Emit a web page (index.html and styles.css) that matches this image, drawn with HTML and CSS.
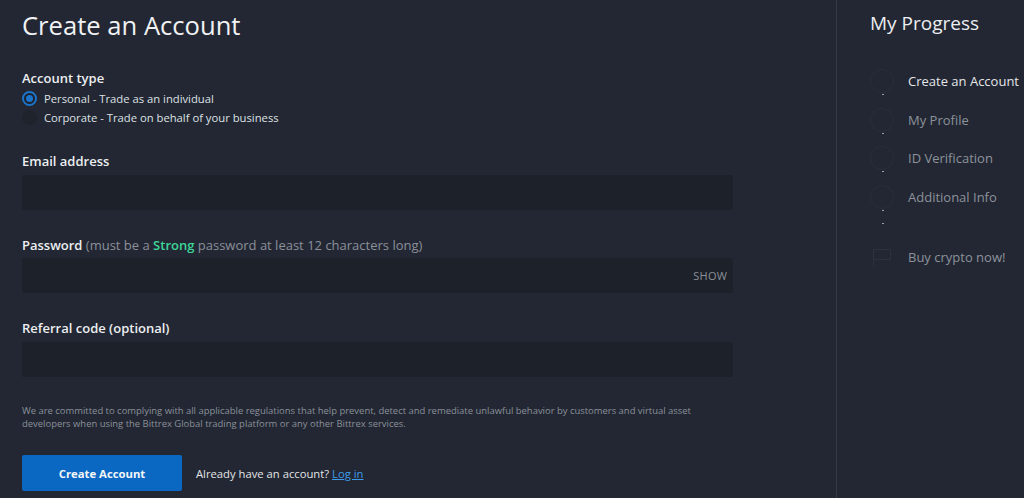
FILE: index.html
```html
<!DOCTYPE html>
<html lang="en">
<head>
<meta charset="utf-8">
<title>Create an Account</title>
<link rel="stylesheet" href="styles.css">
</head>
<body>
<div class="page">
  <main class="main">
    <h1 class="title">Create an Account</h1>

    <div class="account-type">
      <div class="label">Account type</div>
      <label class="radio-row">
        <span class="radio checked"></span>
        <span>Personal - Trade as an individual</span>
      </label>
      <label class="radio-row">
        <span class="radio"></span>
        <span>Corporate - Trade on behalf of your business</span>
      </label>
    </div>

    <div class="field">
      <div class="label">Email address</div>
      <div class="input"></div>
    </div>

    <div class="field field-password">
      <div class="label">Password <span class="hint">(must be a <span class="strong">Strong</span> password at least 12 characters long)</span></div>
      <div class="input"><span class="show">SHOW</span></div>
    </div>

    <div class="field">
      <div class="label">Referral code (optional)</div>
      <div class="input"></div>
    </div>

    <p class="disclaimer">We are committed to complying with all applicable regulations that help prevent, detect and remediate unlawful behavior by customers and virtual asset developers when using the Bittrex Global trading platform or any other Bittrex services.</p>

    <div class="actions">
      <button class="btn">Create Account</button>
      <span class="already">Already have an account? <a class="login" href="#">Log in</a></span>
    </div>
  </main>

  <aside class="side">
    <h2 class="side-title">My Progress</h2>
    <ul class="steps">
      <li class="step active"><span class="circle"></span><span>Create an Account</span></li>
      <li class="step"><span class="circle"></span><span>My Profile</span></li>
      <li class="step"><span class="circle"></span><span>ID Verification</span></li>
      <li class="step extra"><span class="circle"></span><span>Additional Info</span></li>
      <li class="step final">
        <svg class="flag" width="20" height="19" viewBox="0 0 20 19" fill="none" stroke="#2c323d" stroke-width="1">
          <path d="M1.5 18.5V1.5H18.5V11.5H1.5"/>
        </svg>
        <span>Buy crypto now!</span>
      </li>
    </ul>
  </aside>
</div>
</body>
</html>
```

FILE: styles.css
```css
* { box-sizing: border-box; }

html, body {
  margin: 0;
  padding: 0;
  background: #222733;
  font-family: "Open Sans", "Liberation Sans", sans-serif;
  color: #e6e8eb;
}

.page {
  display: flex;
  height: 498px;
  overflow: hidden;
}

.main {
  width: 837px;
  padding: 10px 0 0 22px;
  border-right: 1px solid #343945;
}

.title {
  margin: 0;
  font-size: 25.6px;
  line-height: 32px;
  font-weight: 400;
  color: #f0f1f3;
}

.account-type {
  margin-top: 27px;
}

.label {
  font-size: 13px;
  line-height: 18px;
  font-weight: 600;
  color: #eceef0;
}

.radio-row {
  display: flex;
  align-items: center;
  gap: 7px;
  height: 19px;
  font-size: 11.25px;
  color: #dfe1e4;
}

.radio-row:first-of-type { margin-top: 2px; }

.radio {
  width: 15px;
  height: 15px;
  border-radius: 50%;
  background: #1f232c;
  flex: none;
}

.radio.checked {
  border: 2px solid #1b74cc;
  background: #1e222b;
  display: flex;
  align-items: center;
  justify-content: center;
}

.radio.checked::after {
  content: "";
  width: 7px;
  height: 7px;
  border-radius: 50%;
  background: #1b74cc;
}

.field {
  margin-top: 25px;
  width: 711px;
}

.field + .field { margin-top: 26px; }

.field .label { margin-bottom: 5px; }

.field-password .label { margin-bottom: 4px; }

.input {
  height: 35px;
  background: #1d2129;
  border-radius: 2px;
  display: flex;
  align-items: center;
  justify-content: flex-end;
  padding-right: 6px;
}

.show {
  font-size: 11px;
  color: #8b9099;
  letter-spacing: 0.2px;
}

.hint {
  font-weight: 400;
  color: #8b9099;
}

.strong {
  color: #3ed598;
  font-weight: 600;
}

.disclaimer {
  margin: 27px 0 0;
  width: 711px;
  font-size: 9.45px;
  line-height: 13px;
  color: #8b9099;
}

.actions {
  margin-top: 25px;
  display: flex;
  align-items: center;
  gap: 14px;
}

.btn {
  width: 160px;
  height: 36px;
  border: none;
  border-radius: 2px;
  background: #0a67c2;
  color: #f4f6f8;
  font-family: "Open Sans", "Liberation Sans", sans-serif;
  font-size: 11.3px;
  font-weight: 700;
}

.already {
  font-size: 11.25px;
  color: #e2e4e7;
}

.login {
  color: #3d9be9;
  text-decoration: underline;
}

.side {
  flex: 1;
  padding: 10px 0 0 33px;
}

.side-title {
  margin: 0;
  font-size: 19px;
  line-height: 26px;
  font-weight: 400;
  color: #eceef0;
}

.steps {
  list-style: none;
  margin: 26px 0 0;
  padding: 0;
}

.step {
  position: relative;
  display: flex;
  align-items: center;
  gap: 14px;
  height: 38.6px;
  font-size: 13px;
  color: #8d929b;
  white-space: nowrap;
}

.step.active { color: #e4e6e9; }

.circle {
  width: 24px;
  height: 24px;
  border-radius: 50%;
  border: 1px solid #292e39;
  flex: none;
}

.step::after {
  content: "";
  position: absolute;
  left: 12px;
  top: 32px;
  width: 2px;
  height: 1px;
  background: #9aa0a8;
}

.step.extra::before {
  content: "";
  position: absolute;
  left: 12px;
  top: 45px;
  width: 2px;
  height: 1px;
  background: #9aa0a8;
}

.step.extra { margin-bottom: 21px; }

.step.final::after { display: none; }

.flag {
  flex: none;
  margin-left: 2px;
  margin-right: 2px;
  margin-top: 2px;
}
```
